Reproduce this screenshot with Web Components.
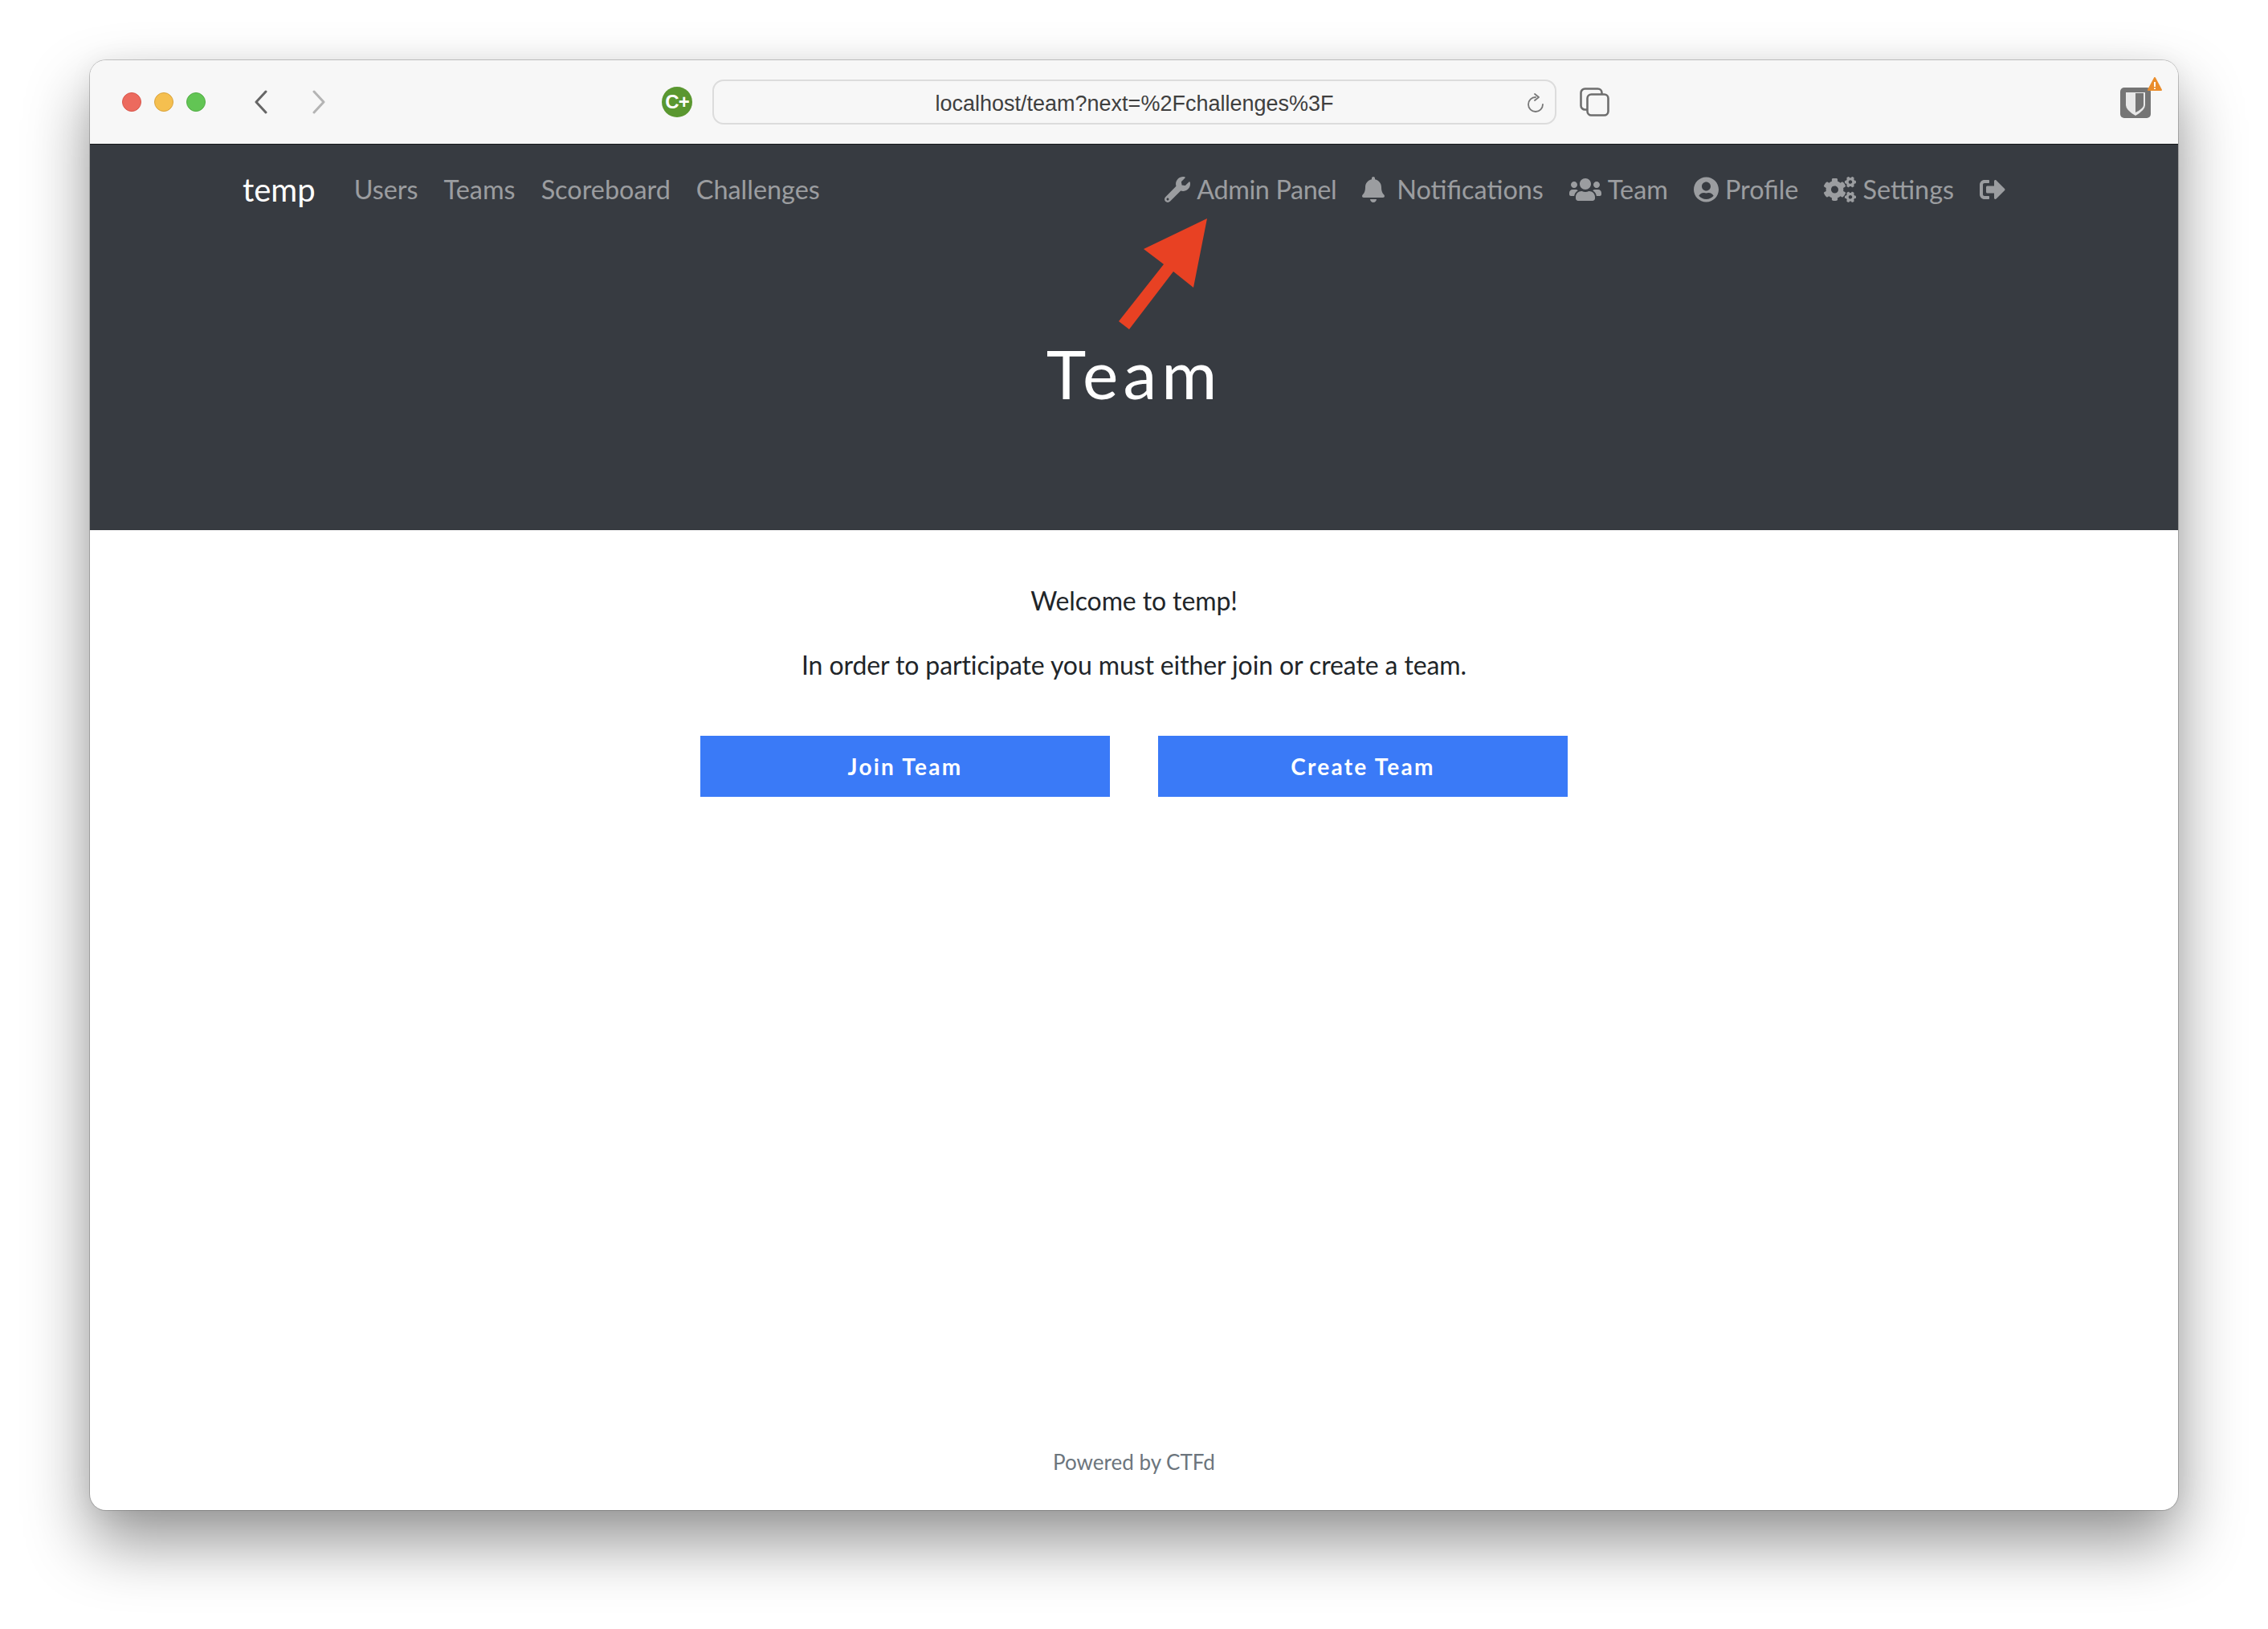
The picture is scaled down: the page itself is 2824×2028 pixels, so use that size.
<!DOCTYPE html>
<html>
<head>
<meta charset="utf-8">
<title>Team</title>
<style>
  html, body { margin: 0; background: #fff; }
  body { padding: 75px 112px 148px; font-family: "Lato", sans-serif; }
</style>
</head>
<body>
<browser-window>
  <window-toolbar slot="toolbar" url="localhost/team?next=%2Fchallenges%3F"></window-toolbar>
  <site-nav slot="nav" brand="temp">
    <nav-link>Users</nav-link>
    <nav-link>Teams</nav-link>
    <nav-link>Scoreboard</nav-link>
    <nav-link>Challenges</nav-link>
    <nav-link slot="right" icon="wrench" style="letter-spacing:-.4px">Admin Panel</nav-link>
    <nav-link slot="right" icon="bell">Notifications</nav-link>
    <nav-link slot="right" icon="users">Team</nav-link>
    <nav-link slot="right" icon="user">Profile</nav-link>
    <nav-link slot="right" icon="cogs">Settings</nav-link>
    <nav-link slot="right" icon="logout"></nav-link>
  </site-nav>
  <page-hero slot="hero">Team</page-hero>
  <team-choice slot="main" name="temp">
    <team-button>Join Team</team-button>
    <team-button>Create Team</team-button>
  </team-choice>
  <site-footer slot="footer">Powered by CTFd</site-footer>
</browser-window>

<script>
const ICONS = {
  wrench: ["0 0 512 512", "M507.73 109.1c-2.24-9.03-13.54-12.09-20.12-5.51l-74.36 74.36-67.88-11.31-11.31-67.88 74.36-74.36c6.62-6.62 3.43-17.9-5.66-20.16-47.38-11.74-99.55.91-136.58 37.93-39.64 39.64-50.55 97.1-34.05 147.2L18.74 402.76c-24.99 24.99-24.99 65.51 0 90.5 24.99 24.99 65.51 24.99 90.5 0l213.21-213.21c50.12 16.71 107.47 5.68 147.37-34.22 37.07-37.07 49.7-89.32 37.91-136.73zM64 472c-13.25 0-24-10.75-24-24 0-13.26 10.75-24 24-24s24 10.74 24 24c0 13.25-10.75 24-24 24z"],
  bell: ["0 0 448 512", "M224 512c35.32 0 63.97-28.65 63.97-64H160.03c0 35.35 28.65 64 63.97 64zm215.39-149.71c-19.32-20.76-55.47-51.99-55.47-154.29 0-77.7-54.48-139.9-127.94-155.16V32c0-17.67-14.32-32-31.98-32s-31.98 14.33-31.98 32v20.84C118.56 68.1 64.08 130.3 64.08 208c0 102.3-36.15 133.53-55.47 154.29-6 6.45-8.66 14.16-8.61 21.71.11 16.4 12.98 32 32.1 32h383.8c19.12 0 32-15.6 32.1-32 .05-7.55-2.61-15.27-8.61-21.71z"],
  users: ["0 0 640 512", "M96 224c35.3 0 64-28.7 64-64s-28.7-64-64-64-64 28.7-64 64 28.7 64 64 64zm448 0c35.3 0 64-28.7 64-64s-28.7-64-64-64-64 28.7-64 64 28.7 64 64 64zm32 32h-64c-17.6 0-33.5 7.1-45.1 18.6 40.3 22.1 68.9 62 75.1 109.4h66c17.7 0 32-14.3 32-32v-32c0-35.3-28.7-64-64-64zm-256 0c61.9 0 112-50.1 112-112S381.9 32 320 32 208 82.1 208 144s50.1 112 112 112zm76.8 32h-8.3c-20.8 10-43.9 16-68.5 16s-47.6-6-68.5-16h-8.3C179.6 288 128 339.6 128 403.2V432c0 26.5 21.5 48 48 48h288c26.5 0 48-21.5 48-48v-28.8c0-63.6-51.6-115.2-115.2-115.2zm-223.7-13.4C161.5 263.1 145.6 256 128 256H64c-35.3 0-64 28.7-64 64v32c0 17.7 14.3 32 32 32h65.9c6.3-47.4 34.9-87.3 75.2-109.4z"],
  user: ["0 0 496 512", "M248 8C111 8 0 119 0 256s111 248 248 248 248-111 248-248S385 8 248 8zm0 96c48.6 0 88 39.4 88 88s-39.4 88-88 88-88-39.4-88-88 39.4-88 88-88zm0 344c-58.7 0-111.3-26.6-146.5-68.2 18.8-35.4 55.6-59.8 98.5-59.8 2.4 0 4.8.4 7.1 1.1 13 4.2 26.6 6.9 40.9 6.9 14.3 0 28-2.7 40.9-6.9 2.3-.7 4.7-1.1 7.1-1.1 42.9 0 79.7 24.4 98.5 59.8C359.3 421.4 306.7 448 248 448z"],
  cogs: ["0 0 640 512", "M512.1 191l-8.2 14.3c-3 5.3-9.4 7.5-15.1 5.4-11.8-4.4-22.6-10.7-32.1-18.6-4.6-3.8-5.8-10.5-2.8-15.7l8.2-14.3c-6.9-8-12.3-17.3-15.9-27.4h-16.5c-6 0-11.2-4.3-12.2-10.3-2-12-2.1-24.6 0-37.1 1-6 6.2-10.4 12.2-10.4h16.5c3.6-10.1 9-19.4 15.9-27.4l-8.2-14.3c-3-5.2-1.9-11.9 2.8-15.7 9.5-7.9 20.4-14.2 32.1-18.6 5.7-2.1 12.1.1 15.1 5.4l8.2 14.3c10.5-1.9 21.2-1.9 31.7 0L552 6.3c3-5.3 9.4-7.5 15.1-5.4 11.8 4.4 22.6 10.7 32.1 18.6 4.6 3.8 5.8 10.5 2.8 15.7l-8.2 14.3c6.9 8 12.3 17.3 15.9 27.4h16.5c6 0 11.2 4.3 12.2 10.3 2 12 2.1 24.6 0 37.1-1 6-6.2 10.4-12.2 10.4h-16.5c-3.6 10.1-9 19.4-15.9 27.4l8.2 14.3c3 5.2 1.9 11.9-2.8 15.7-9.5 7.9-20.4 14.2-32.1 18.6-5.7 2.1-12.1-.1-15.1-5.4l-8.2-14.3c-10.4 1.9-21.2 1.9-31.7 0zm-10.5-58.8c38.5 29.6 82.4-14.3 52.8-52.8-38.5-29.7-82.4 14.3-52.8 52.8zM386.3 286.1l33.7 16.8c10.1 5.8 14.5 18.1 10.5 29.1-8.9 24.2-26.4 46.4-42.6 65.8-7.4 8.9-20.2 11.1-30.3 5.3l-29.1-16.8c-16 13.7-34.6 24.6-54.9 31.7v33.6c0 11.6-8.3 21.6-19.7 23.6-24.6 4.2-50.4 4.4-75.9 0-11.5-2-20-11.9-20-23.6V418c-20.3-7.2-38.9-18-54.9-31.7L74 403c-10 5.8-22.9 3.6-30.3-5.3-16.2-19.4-33.3-41.6-42.2-65.7-4-10.9.4-23.2 10.5-29.1l33.3-16.8c-3.9-20.9-3.9-42.4 0-63.4L12 205.8c-10.1-5.8-14.6-18.1-10.5-29 8.9-24.2 26-46.4 42.2-65.8 7.4-8.9 20.2-11.1 30.3-5.3l29.1 16.8c16-13.7 34.6-24.6 54.9-31.7V57.1c0-11.5 8.2-21.5 19.6-23.5 24.6-4.2 50.5-4.4 76-.1 11.5 2 20 11.9 20 23.6v33.6c20.3 7.2 38.9 18 54.9 31.7l29.1-16.8c10-5.8 22.9-3.6 30.3 5.3 16.2 19.4 33.2 41.6 42.1 65.8 4 10.9.1 23.2-10 29.1l-33.7 16.8c3.9 21 3.9 42.5 0 63.5zm-117.6 21.1c59.2-77-28.7-164.9-105.7-105.7-59.2 77 28.7 164.9 105.7 105.7zm243.4 182.7l-8.2 14.3c-3 5.3-9.4 7.5-15.1 5.4-11.8-4.4-22.6-10.7-32.1-18.6-4.6-3.8-5.8-10.5-2.8-15.7l8.2-14.3c-6.9-8-12.3-17.3-15.9-27.4h-16.5c-6 0-11.2-4.3-12.2-10.3-2-12-2.1-24.6 0-37.1 1-6 6.2-10.4 12.2-10.4h16.5c3.6-10.1 9-19.4 15.9-27.4l-8.2-14.3c-3-5.2-1.9-11.9 2.8-15.7 9.5-7.9 20.4-14.2 32.1-18.6 5.7-2.1 12.1.1 15.1 5.4l8.2 14.3c10.5-1.9 21.2-1.9 31.7 0l8.2-14.3c3-5.3 9.4-7.5 15.1-5.4 11.8 4.4 22.6 10.7 32.1 18.6 4.6 3.8 5.8 10.5 2.8 15.7l-8.2 14.3c6.9 8 12.3 17.3 15.9 27.4h16.5c6 0 11.2 4.3 12.2 10.3 2 12 2.1 24.6 0 37.1-1 6-6.2 10.4-12.2 10.4h-16.5c-3.6 10.1-9 19.4-15.9 27.4l8.2 14.3c3 5.2 1.9 11.9-2.8 15.7-9.5 7.9-20.4 14.2-32.1 18.6-5.7 2.1-12.1-.1-15.1-5.4l-8.2-14.3c-10.4 1.9-21.2 1.9-31.7 0zM501.6 431c38.5 29.6 82.4-14.3 52.8-52.8-38.5-29.6-82.4 14.3-52.8 52.8z"],
  logout: ["0 0 512 512", "M497 273L329 441c-15 15-41 4.5-41-17v-96H152c-13.3 0-24-10.7-24-24v-96c0-13.3 10.7-24 24-24h136V88c0-21.4 25.9-32 41-17l168 168c9.3 9.4 9.3 24.6 0 34zM192 436v-40c0-6.6-5.4-12-12-12H96c-17.7 0-32-14.3-32-32V160c0-17.7 14.3-32 32-32h84c6.6 0 12-5.4 12-12V76c0-6.6-5.4-12-12-12H96c-53 0-96 43-96 96v192c0 53 43 96 96 96h84c6.6 0 12-5.4 12-12z"]
};

class BrowserWindow extends HTMLElement {
  constructor() {
    super();
    this.attachShadow({ mode: "open" });
    this.shadowRoot.innerHTML = `
    <style>
      :host {
        display: flex;
        flex-direction: column;
        height: 1805px;
        border-radius: 20px;
        background: #fff;
        box-shadow: 0 0 0 1px rgba(0,0,0,.2), 0 40px 80px rgba(0,0,0,.42), 0 0 30px rgba(0,0,0,.05);
      }
      .hero-wrap { position: relative; }
      .clip-bottom { flex: 1; display: flex; flex-direction: column; border-radius: 0 0 20px 20px; overflow: hidden; }
      svg { position: absolute; pointer-events: none; }
    </style>
    <slot name="toolbar"></slot>
    <div class="hero-wrap">
      <slot name="nav"></slot>
      <slot name="hero"></slot>
      <svg width="200" height="200" viewBox="0 0 200 200" style="left:1270px;top:80px">
        <polygon fill="#e84123" points="121,12 42,50 67,69 11,140 24,150 79,78 104,98"/>
      </svg>
    </div>
    <main class="clip-bottom">
      <slot name="main"></slot>
      <slot name="footer"></slot>
    </main>`;
  }
}
customElements.define("browser-window", BrowserWindow);

class WindowToolbar extends HTMLElement {
  constructor() {
    super();
    this.attachShadow({ mode: "open" });
  }
  connectedCallback() {
    this.shadowRoot.innerHTML = `
    <style>
      :host {
        display: flex;
        align-items: center;
        height: 105px;
        box-sizing: border-box;
        padding: 0 16px 0 40px;
        background: #f7f7f7;
        border-radius: 20px 20px 0 0;
        border-bottom: 1px solid #15171a;
      }
      .dot { width: 24px; height: 24px; border-radius: 50%; box-sizing: border-box; margin-right: 16px; }
      .red { background: #ec6a5e; border: 1px solid #d8574c; }
      .yellow { background: #f5bf4f; border: 1px solid #d9a33c; }
      .green { background: #62c554; border: 1px solid #53ad46; }
      .back { margin-left: 44px; }
      .forward { margin-left: 54px; }
      .ext { margin-left: 418px; width: 38px; height: 38px; border-radius: 50%; background: #5a9730; color: #fff;
        display: flex; align-items: center; justify-content: center; font: 700 24px "Liberation Sans", sans-serif; letter-spacing: -1px; }
      .url {
        margin-left: 25px;
        width: 1051px;
        height: 56px;
        box-sizing: border-box;
        border: 2px solid #dcdcdc;
        border-radius: 14px;
        padding-top: 5px;
        display: flex;
        align-items: center;
        justify-content: center;
        position: relative;
        font: 27px "Liberation Sans", sans-serif;
        color: #3f3f3f;
      }
      .reload { position: absolute; right: 12px; top: 15px; }
      .copy { margin-left: 29px; }
      .shield { margin-left: auto; align-self: flex-start; margin-top: 17px; width: 56px; height: 56px; }
    </style>
    <span class="dot red"></span><span class="dot yellow"></span><span class="dot green"></span>
    <svg class="back" width="18" height="30" viewBox="0 0 18 30"><path d="M15 2 3 15l12 13" fill="none" stroke="#666" stroke-width="3" stroke-linecap="round" stroke-linejoin="round"/></svg>
    <svg class="forward" width="18" height="30" viewBox="0 0 18 30"><path d="M3 2l12 13L3 28" fill="none" stroke="#b4b4b4" stroke-width="3" stroke-linecap="round" stroke-linejoin="round"/></svg>
    <span class="ext">C+</span>
    <div class="url">${this.getAttribute("url")}
      <svg class="reload" width="24" height="26" viewBox="0 0 24 26"><path d="M12 5a9 9 0 1 0 9 9" fill="none" stroke="#777" stroke-width="1.8" stroke-linecap="round"/><path d="M11 1l5 4-5 4" fill="none" stroke="#777" stroke-width="1.8" stroke-linecap="round" stroke-linejoin="round"/></svg>
    </div>
    <svg class="copy" width="37" height="36" viewBox="0 0 37 36"><rect x="1.5" y="1.5" width="26" height="26" rx="5" fill="none" stroke="#6e6e6e" stroke-width="2.6"/><rect x="9.5" y="8.5" width="26" height="26" rx="5" fill="#f7f7f7" stroke="#6e6e6e" stroke-width="2.6"/></svg>
    <svg class="shield" viewBox="0 0 56 56">
      <rect x="0" y="17" width="38" height="38" rx="5" fill="#757575"/>
      <path d="M7 23h24v16q0 6-12 13Q7 45 7 39z" fill="#e8e8e8"/>
      <path d="M19 24h10v15q0 4-10 9z" fill="#757575"/>
      <path d="M43 5 35 20h16z" fill="#ea8d2c" stroke="#ea8d2c" stroke-width="2" stroke-linejoin="round"/>
      <path d="M43 10v6M43 17.5v1.6" stroke="#fff" stroke-width="2"/>
    </svg>`;
  }
}
customElements.define("window-toolbar", WindowToolbar);

class SiteNav extends HTMLElement {
  constructor() {
    super();
    this.attachShadow({ mode: "open" });
  }
  connectedCallback() {
    this.shadowRoot.innerHTML = `
    <style>
      :host {
        display: flex;
        align-items: center;
        height: 112px;
        padding: 0 215px 0 190px;
        background: #373b41;
      }
      .brand { color: #fff; font-size: 40px; margin-right: 48px; }
      .group { display: flex; gap: 32px; align-items: center; }
      .right { margin-left: auto; }
    </style>
    <span class="brand">${this.getAttribute("brand")}</span>
    <div class="group"><slot></slot></div>
    <div class="group right"><slot name="right"></slot></div>`;
  }
}
customElements.define("site-nav", SiteNav);

class NavLink extends HTMLElement {
  constructor() {
    super();
    this.attachShadow({ mode: "open" });
  }
  connectedCallback() {
    const name = this.getAttribute("icon");
    let icon = "";
    if (name) {
      const [box, d] = ICONS[name];
      const w = box.split(" ")[2] / 512 * 32;
      icon = `<svg width="${w}" height="32" viewBox="${box}"><path fill="currentColor" d="${d}"/></svg>`;
    }
    this.shadowRoot.innerHTML = `
    <style>
      :host { display: inline-flex; align-items: center; gap: 8px; color: rgba(255,255,255,.5); font-size: 32.4px; line-height: 48px; }
      :host([icon="bell"]) svg { margin-right: 7px; }
      svg { display: block; }
    </style>
    ${icon}<slot></slot>`;
  }
}
customElements.define("nav-link", NavLink);

class PageHero extends HTMLElement {
  constructor() {
    super();
    this.attachShadow({ mode: "open" });
    this.shadowRoot.innerHTML = `
    <style>
      :host {
        display: block;
        height: 368px;
        box-sizing: border-box;
        padding-top: 125px;
        background: #373b41;
        color: #fff;
        text-align: center;
      }
      h1 { margin: 0; font: 400 84px/96px "Lato", sans-serif; letter-spacing: 6px; }
    </style>
    <h1><slot></slot></h1>`;
  }
}
customElements.define("page-hero", PageHero);

class TeamChoice extends HTMLElement {
  constructor() {
    super();
    this.attachShadow({ mode: "open" });
  }
  connectedCallback() {
    this.shadowRoot.innerHTML = `
    <style>
      :host { display: block; flex: 1; padding-top: 64px; text-align: center; color: #212529; font-size: 32px; line-height: 48px; letter-spacing: -.11px; }
      p { margin: 0 0 32px; }
      .actions { display: flex; justify-content: center; gap: 60px; margin-top: 64px; }
    </style>
    <p>Welcome to ${this.getAttribute("name")}!</p>
    <p>In order to participate you must either join or create a team.</p>
    <div class="actions"><slot></slot></div>`;
  }
}
customElements.define("team-choice", TeamChoice);

class TeamButton extends HTMLElement {
  constructor() {
    super();
    this.attachShadow({ mode: "open" });
    this.shadowRoot.innerHTML = `
    <style>
      :host {
        display: flex;
        align-items: center;
        justify-content: center;
        width: 510px;
        height: 76px;
        background: #3a7af7;
        color: #fff;
        font-size: 28px;
        font-weight: 700;
        letter-spacing: 2.25px;
      }
    </style>
    <slot></slot>`;
  }
}
customElements.define("team-button", TeamButton);

class SiteFooter extends HTMLElement {
  constructor() {
    super();
    this.attachShadow({ mode: "open" });
    this.shadowRoot.innerHTML = `
    <style>
      :host { display: block; padding-bottom: 40px; text-align: center; color: #6c757d; font-size: 26px; line-height: 40px; }
    </style>
    <slot></slot>`;
  }
}
customElements.define("site-footer", SiteFooter);
</script>
</body>
</html>
